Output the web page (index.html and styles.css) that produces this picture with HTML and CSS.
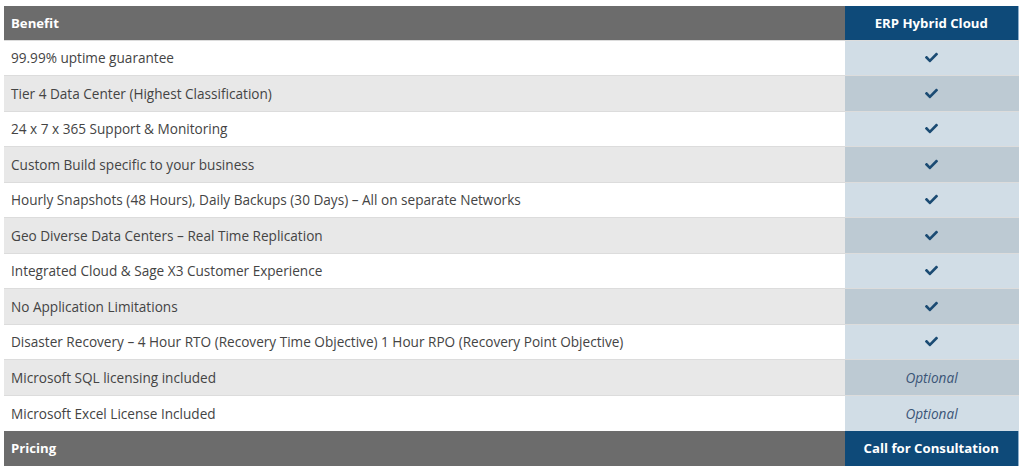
FILE: index.html
```html
<!DOCTYPE html>
<html>
<head>
<meta charset="utf-8">
<link rel="stylesheet" href="styles.css">
</head>
<body>
<table class="compare">
  <thead>
    <tr class="head"><th class="benefit">Benefit</th><th class="plan">ERP Hybrid Cloud</th></tr>
  </thead>
  <tbody>
    <tr><td class="benefit">99.99% uptime guarantee</td><td class="plan"><svg class="check" viewBox="0 0 512 512"><path d="M173.9 439.4 7.5 273c-10-10-10-26.2 0-36.2l36.2-36.2c10-10 26.2-10 36.2 0L192 312.7 432.1 72.6c10-10 26.2-10 36.2 0l36.2 36.2c10 10 10 26.2 0 36.2L210.1 439.4c-10 10-26.2 10-36.2 0z"/></svg></td></tr>
    <tr><td class="benefit">Tier 4 Data Center (Highest Classification)</td><td class="plan"><svg class="check" viewBox="0 0 512 512"><path d="M173.9 439.4 7.5 273c-10-10-10-26.2 0-36.2l36.2-36.2c10-10 26.2-10 36.2 0L192 312.7 432.1 72.6c10-10 26.2-10 36.2 0l36.2 36.2c10 10 10 26.2 0 36.2L210.1 439.4c-10 10-26.2 10-36.2 0z"/></svg></td></tr>
    <tr><td class="benefit">24 x 7 x 365 Support &amp; Monitoring</td><td class="plan"><svg class="check" viewBox="0 0 512 512"><path d="M173.9 439.4 7.5 273c-10-10-10-26.2 0-36.2l36.2-36.2c10-10 26.2-10 36.2 0L192 312.7 432.1 72.6c10-10 26.2-10 36.2 0l36.2 36.2c10 10 10 26.2 0 36.2L210.1 439.4c-10 10-26.2 10-36.2 0z"/></svg></td></tr>
    <tr><td class="benefit">Custom Build specific to your business</td><td class="plan"><svg class="check" viewBox="0 0 512 512"><path d="M173.9 439.4 7.5 273c-10-10-10-26.2 0-36.2l36.2-36.2c10-10 26.2-10 36.2 0L192 312.7 432.1 72.6c10-10 26.2-10 36.2 0l36.2 36.2c10 10 10 26.2 0 36.2L210.1 439.4c-10 10-26.2 10-36.2 0z"/></svg></td></tr>
    <tr><td class="benefit">Hourly Snapshots (48 Hours), Daily Backups (30 Days) – All on separate Networks</td><td class="plan"><svg class="check" viewBox="0 0 512 512"><path d="M173.9 439.4 7.5 273c-10-10-10-26.2 0-36.2l36.2-36.2c10-10 26.2-10 36.2 0L192 312.7 432.1 72.6c10-10 26.2-10 36.2 0l36.2 36.2c10 10 10 26.2 0 36.2L210.1 439.4c-10 10-26.2 10-36.2 0z"/></svg></td></tr>
    <tr><td class="benefit">Geo Diverse Data Centers – Real Time Replication</td><td class="plan"><svg class="check" viewBox="0 0 512 512"><path d="M173.9 439.4 7.5 273c-10-10-10-26.2 0-36.2l36.2-36.2c10-10 26.2-10 36.2 0L192 312.7 432.1 72.6c10-10 26.2-10 36.2 0l36.2 36.2c10 10 10 26.2 0 36.2L210.1 439.4c-10 10-26.2 10-36.2 0z"/></svg></td></tr>
    <tr><td class="benefit">Integrated Cloud &amp; Sage X3 Customer Experience</td><td class="plan"><svg class="check" viewBox="0 0 512 512"><path d="M173.9 439.4 7.5 273c-10-10-10-26.2 0-36.2l36.2-36.2c10-10 26.2-10 36.2 0L192 312.7 432.1 72.6c10-10 26.2-10 36.2 0l36.2 36.2c10 10 10 26.2 0 36.2L210.1 439.4c-10 10-26.2 10-36.2 0z"/></svg></td></tr>
    <tr><td class="benefit">No Application Limitations</td><td class="plan"><svg class="check" viewBox="0 0 512 512"><path d="M173.9 439.4 7.5 273c-10-10-10-26.2 0-36.2l36.2-36.2c10-10 26.2-10 36.2 0L192 312.7 432.1 72.6c10-10 26.2-10 36.2 0l36.2 36.2c10 10 10 26.2 0 36.2L210.1 439.4c-10 10-26.2 10-36.2 0z"/></svg></td></tr>
    <tr><td class="benefit">Disaster Recovery – 4 Hour RTO (Recovery Time Objective) 1 Hour RPO (Recovery Point Objective)</td><td class="plan"><svg class="check" viewBox="0 0 512 512"><path d="M173.9 439.4 7.5 273c-10-10-10-26.2 0-36.2l36.2-36.2c10-10 26.2-10 36.2 0L192 312.7 432.1 72.6c10-10 26.2-10 36.2 0l36.2 36.2c10 10 10 26.2 0 36.2L210.1 439.4c-10 10-26.2 10-36.2 0z"/></svg></td></tr>
    <tr><td class="benefit">Microsoft SQL licensing included</td><td class="plan"><em class="optional">Optional</em></td></tr>
    <tr><td class="benefit">Microsoft Excel License Included</td><td class="plan"><em class="optional">Optional</em></td></tr>
  </tbody>
  <tfoot>
    <tr class="head"><th class="benefit">Pricing</th><th class="plan">Call for Consultation</th></tr>
  </tfoot>
</table>
</body>
</html>
```
FILE: styles.css
```css
html, body {
  margin: 0;
  padding: 0;
  background: #ffffff;
}
body {
  padding: 6px 5px 0 4px;
  font-family: "Open Sans", "Liberation Sans", sans-serif;
  font-size: 13.6px;
  color: #444444;
}
.compare {
  width: 1015px;
  border-collapse: collapse;
  table-layout: fixed;
}
.compare td,
.compare th {
  height: 35.5px;
  padding: 0 7px;
  border-bottom: 1px solid #dcdcdc;
  vertical-align: middle;
  box-sizing: border-box;
}
.compare tr:last-child td,
.compare tfoot th {
  border-bottom: none;
}
.compare .benefit {
  text-align: left;
}
.compare .plan {
  width: 174px;
  text-align: center;
}
.head th {
  font-weight: 700;
  font-size: 13.2px;
  color: #ffffff;
  background: #6c6c6c;
  height: 34px;
}
tfoot .head th {
  height: 35px;
}
.head th.plan {
  background: #0e4a79;
  border-right: 1px solid #8fb0cc;
}
tbody tr:nth-child(odd) td.benefit { background: #ffffff; }
tbody tr:nth-child(even) td.benefit { background: #e8e8e8; }
tbody tr:nth-child(odd) td.plan { background: #d1dde6; }
tbody tr:nth-child(even) td.plan { background: #bdcad3; }
.check {
  width: 13px;
  height: 13px;
  fill: #1b4b73;
  display: inline-block;
  vertical-align: middle;
  margin-top: -4px;
}
.optional {
  font-style: italic;
  color: #3b5577;
}
```
